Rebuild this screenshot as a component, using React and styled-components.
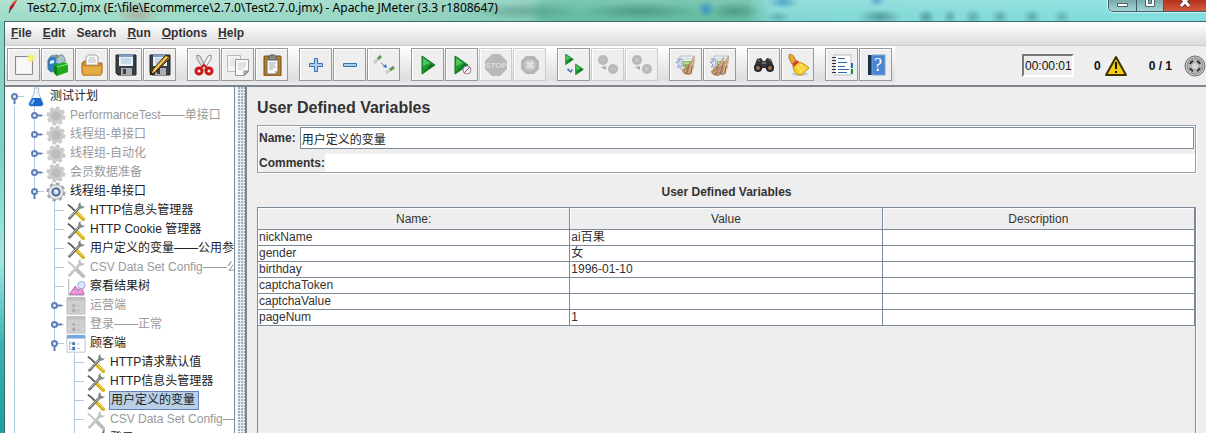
import React, { useState } from "react"
import styled, { createGlobalStyle } from "styled-components"

const GlobalStyle = createGlobalStyle`
* { box-sizing: border-box; }
body {
    margin: 0;
    font: 12px/16px "Liberation Sans", Arial, "Noto Sans CJK SC", sans-serif;
    color: #333;
    background: #eee;
}
button, input { font: inherit; color: inherit; }
`

const Window = styled.div`
display: flex;
flex-direction: column;
height: 100vh;
overflow: hidden;
padding-left: 4px;
background: linear-gradient(#8fd6c3, #7fd0c8 35%, #a4e6e2 60%, #35b3ae 80%, #1d9fa0);
`

const TitleBar = styled.header`
display: flex;
justify-content: space-between;
align-items: flex-start;
height: 21px;
flex: none;
margin-left: -4px;
padding-left: 6px;
background:
    radial-gradient(ellipse 22px 14px at 138px 14px, rgba(190,120,110,0.4), transparent),
    radial-gradient(ellipse 60px 9px at 525px 11px, rgba(40,100,90,0.3), transparent),
    radial-gradient(ellipse 60px 9px at 640px 11px, rgba(30,90,80,0.35), transparent),
    radial-gradient(ellipse 9px 9px at 706px 9px, rgba(30,120,210,0.6), transparent),
    radial-gradient(ellipse 26px 9px at 735px 11px, rgba(30,90,80,0.35), transparent),
    radial-gradient(ellipse 16px 7px at 783px 2px, rgba(40,130,190,0.6), transparent),
    radial-gradient(ellipse 13px 6px at 778px 17px, rgba(40,110,110,0.35), transparent),
    radial-gradient(ellipse 9px 7px at 877px 0, rgba(50,110,200,0.5), transparent),
    radial-gradient(ellipse 22px 8px at 880px 17px, rgba(30,80,90,0.45), transparent),
    radial-gradient(ellipse 9px 8px at 926px 17px, rgba(30,80,90,0.45), transparent),
    radial-gradient(ellipse 7px 8px at 950px 17px, rgba(30,80,90,0.35), transparent),
    radial-gradient(ellipse 9px 8px at 973px 17px, rgba(30,80,90,0.35), transparent),
    radial-gradient(ellipse 9px 8px at 1000px 17px, rgba(30,80,90,0.35), transparent),
    radial-gradient(ellipse 9px 8px at 1032px 17px, rgba(30,80,90,0.35), transparent),
    radial-gradient(ellipse 9px 8px at 1062px 17px, rgba(30,80,90,0.3), transparent),
    linear-gradient(rgba(255,255,255,0.15), rgba(255,255,255,0) 70%),
    linear-gradient(90deg, #a3ddca 0, #9ad8c6 30%, #85cbb7 44%, #66bda4 45%, #66bda4 62%, #83d8d4 64%, #84dfe0 100%);
`

const Title = styled.h1`
display: flex;
gap: 4px;
margin: 0;
font: 12px/16px "Noto Sans", "Open Sans", sans-serif;
color: #000;
white-space: nowrap;
`

const WindowControls = styled.div`
display: flex;
border: 1px solid #3d5f66;
border-top: none;
border-right: none;
border-radius: 0 0 0 5px;
overflow: hidden;
box-shadow: 0 0 1px 1px rgba(255,255,255,0.6);
`

const WindowButton = styled.button`
display: flex;
justify-content: center;
width: ${props => props.$close ? "43px" : "27px"};
height: 11px;
padding: 0;
border: none;
border-left: ${props => props.$first ? "none" : "1px solid #3d5f66"};
background: ${props => props.$close ? "linear-gradient(#b8301c, #cf5c43)" : "linear-gradient(#78aaae, #a5d5d6)"};
`

const Body = styled.div`
display: flex;
flex-direction: column;
flex: 1;
min-height: 0;
border-top: 1px solid #3c6a6a;
border-left: 1px solid #3c6a6a;
background: #eee;
`

const MenuBar = styled.nav`
display: flex;
height: 24px;
flex: none;
padding-left: 1px;
border-bottom: 1px solid #ccc;
background: linear-gradient(#fff, #dcdcdc);
`

const MenuItem = styled.button`
padding: 0 6px 2px 5px;
border: none;
background: none;
font-weight: bold;
&::first-letter {
    text-decoration: ${props => props.$plain ? "none" : "underline"};
}
`

const ToolBar = styled.div`
display: flex;
align-items: center;
justify-content: space-between;
height: 39px;
flex: none;
`

const Tools = styled.div`
display: flex;
gap: 11px;
height: 39px;
padding: 2px 3px 4px 2px;
background: linear-gradient(#fff, #dedede 85%, #eee);
`

const ToolGroup = styled.div`
display: flex;
gap: 1px;
`

const ToolButton = styled.button`
display: flex;
align-items: center;
justify-content: center;
width: 33px;
height: 33px;
padding: 0;
border: 1px solid #999;
background: #eee;
box-shadow: inset 1px 1px #fff;
&:disabled {
    border-color: #ccc;
}
`

const Status = styled.div`
display: flex;
align-items: center;
color: #111;
font-weight: bold;
`

const Clock = styled.output`
width: 52px;
height: 23px;
padding: 2px 1px;
margin-right: 20px;
border: 2px solid;
border-color: #777 #fff #fff #777;
font-weight: normal;
text-align: center;
`

const ErrorCount = styled.span`
display: flex;
align-items: center;
gap: 4px;
margin-right: 22px;
`

const Threads = styled.span`
margin-right: 12px;
`

const Split = styled.div`
display: flex;
flex: 1;
min-height: 0;
border-top: 2px solid #7f858c;
`

const TreePane = styled.ul`
width: 230px;
flex: none;
margin: 0;
padding: 0 0 0 1px;
list-style: none;
background: #fff;
border-right: 1px solid #7a8a99;
overflow: hidden;
`

const Divider = styled.div`
width: 10px;
flex: none;
border-left: 3px solid #f6f8fa;
background: #eee radial-gradient(circle at 1px 1px, #9fb0c0 1px, transparent 1px) 0 0 / 3px 3px;
`

const TreeRow = styled.li`
display: flex;
align-items: center;
height: 19px;
white-space: nowrap;
svg { flex: none; }
`

const TreeLabel = styled.span`
height: 19px;
margin-left: 3px;
padding: 0 3px 0 1px;
line-height: 17px;
border: 1px solid ${props => props.$selected ? "#6382bf" : "transparent"};
border-left-width: ${props => props.$selected ? "1px" : "0"};
background: ${props => props.$selected ? "#b8cfe5" : "none"};
color: ${props => props.$off ? "#999" : "#222"};
`

const Main = styled.main`
display: flex;
flex-direction: column;
flex: 1;
min-width: 0;
padding: 11px 10px 0;
border-left: 2px solid #7f858c;
`

const Heading = styled.h2`
margin: 0 0 7px;
font-size: 16px;
line-height: 20px;
`

const Fields = styled.form`
display: flex;
flex-direction: column;
gap: 5px;
flex: none;
padding: 1px 0 0 1px;
border: 1px solid #999fa8;
box-shadow: 1px 1px #fff, inset 1px 1px #fff;
`

const Field = styled.div`
display: flex;
align-items: center;
gap: ${props => props.$gap};
label {
    font-weight: bold;
}
input {
    flex: 1;
    min-width: 0;
    height: ${props => props.$framed ? "22px" : "18px"};
    margin-right: ${props => props.$framed ? "1px" : "0"};
    padding: 0 1px;
    border: ${props => props.$framed ? "1px solid #7a8a99" : "none"};
    background: #fff;
    color: #222;
    outline: none;
}
`

const Subtitle = styled.h3`
margin: 11px 0 7px;
font-size: 12px;
line-height: 16px;
text-align: center;
`

const TablePane = styled.div`
flex: 1;
min-height: 0;
border: 1px solid #7a8a99;
border-bottom: none;
box-shadow: 1px 0 #fff;
`

const Table = styled.table`
width: 100%;
table-layout: fixed;
border-spacing: 0;
th, td {
    padding: 0 1px;
    border-right: 1px solid #7a8a99;
    border-bottom: 1px solid #7a8a99;
}
th {
    height: 22px;
    font-weight: normal;
    box-shadow: inset 1px 1px #fff;
}
td {
    height: 16px;
    line-height: 15px;
    background: #fff;
}
`

const Pic = ({ size = 22, children }) => (
    <svg width={size} height={size} viewBox="0 0 22 22" fill="none" aria-hidden="true">{children}</svg>
)

const floppy = <>
    <path d="M1 1h20v20H3l-2-2z" fill="#3a3d42" stroke="#25272b" />
    <path d="M4 1h14v11H4z" fill="#e6f1fa" />
    <path d="M4 1h14v2H4z" fill="#7aa0c8" />
    <path d="M6 5h10M6 7h10M6 9h10" stroke="#aebfd0" />
    <path d="M6 14h11v7H6z" fill="#a9adb3" />
    <path d="M8 15h3v5H8z" fill="#3a3d42" />
</>

const Play = ({ x = 4, y = 2, s = 1 }) => (
    <g transform={`translate(${x} ${y}) scale(${s})`}>
        <path d="M1 0l13 9L1 18z" fill="#1e9a2e" stroke="#0c7420" />
        <path d="M2 2l7 5L2 10z" fill="#52c45c" />
        <path d="M2 16l11-7-3-1z" fill="#14661f" />
    </g>
)

const broom = <>
    <path d="M20 1l-5 8-8 7c0 3 3 5 8 5l4-9z" fill="#b98d67" />
    <path d="M19 4l-5 15M17 9l-7 9M19 9l-3 11" stroke="#e0c09c" />
    <path d="M14 11l-3 9M17 12l-1 8" stroke="#8c6546" />
</>

const notes = <>
    <path d="M5 2h13v13H5z" fill="#edf2f4" stroke="#b4bfc8" />
    <path d="M2 5l3 2-4 1 3 3-2 2h5v-8z" fill="#d3dcea" stroke="#93a5c2" />
    <path d="M8 7h8v6H8z" fill="#86b957" />
    <path d="M9 8h5v2H9z" fill="#b9dc8d" />
    <path d="M7 5h10" stroke="#c1c9ce" />
</>

const balls = (x) => <g>
    <circle cx="6" cy="6" r="5" fill="#b8b8b8" />
    <circle cx="16" cy="15" r="5" fill="#b8b8b8" />
    <path d="M4 13l5 3v-4z" fill="#aaa" />
    {x ? <path d="M4 4l4 4M8 4L4 8M14 13l4 4M18 13l-4 4" stroke="#d4d4d4" /> : <path d="M3 6h6M13 15h6" stroke="#ccc" />}
</g>

const art = {
    blank: <>
        <path d="M2.500 2.500h17v18h-17z" fill="#eee" stroke="#888" />
        <path d="M4 4h14v15H4z" fill="#f8f8f8" />
        <circle cx="18" cy="4" r="4" fill="#f4ee8a" opacity="0.7" />
        <circle cx="18" cy="4" r="2" fill="#fdf95c" />
    </>,
    templates: <>
        <path d="M1 6l3-4 6-1 1 3v13l-7 1-3-3z" fill="#2f7fc4" stroke="#4b7590" />
        <path d="M4 3c4-3 6 0 6 4M11 3c4-4 7 0 7 5" stroke="#8b999f" strokeWidth="2" />
        <path d="M11 3h6l1 6H9z" fill="#aac4cc" />
        <path d="M3 7l4-1v3l-4 1z" fill="#e9f6ff" />
        <path d="M7 11l10-3 4 2v8l-11 4-3-3z" fill="#20aa22" />
        <path d="M7 11l3 2v9l-3-3z" fill="#087d16" />
        <path d="M10 13l11-3" stroke="#88ee73" />
    </>,
    open: <>
        <path d="M1 9l2-2h6l1 2h11v10l-2 2H2l-1-2z" fill="#cf8b1e" stroke="#a66a12" />
        <path d="M5 11V3l3-2h7l2 2v8z" fill="#fafafa" stroke="#a5a5a5" />
        <path d="M8 4h6M7 6h8M7 8h8" stroke="#bbb" />
        <path d="M1 12h20l-1 9H2z" fill="#e5ab45" stroke="#c48221" />
    </>,
    save: floppy,
    saveAs: <>
        {floppy}
        <path d="M17 1l4 3L7 18l-6 3 3-6z" fill="#e5a62d" stroke="#322313" />
        <path d="M18 3L5 17" stroke="#fff0a0" />
        <path d="M19 4L7 17" stroke="#322313" />
        <path d="M1 21l1-3 2 2z" fill="#111" />
    </>,
    cut: <>
        <path d="M4 1l3 1 7 13-3 1L4 5z" fill="#d9dcdd" stroke="#8a8e90" />
        <path d="M18 1l-3 1-7 13 3 1 7-11z" fill="#f2f2f2" stroke="#8a8e90" />
        <ellipse cx="6" cy="17" rx="3" ry="3" stroke="#d01818" strokeWidth="3" />
        <ellipse cx="16" cy="17" rx="3" ry="3" stroke="#d01818" strokeWidth="3" />
        <path d="M8 14l3-3 3 3" stroke="#d01818" strokeWidth="2" />
    </>,
    copy: <>
        <path d="M0.500 1.500h13v16h-13z" fill="#f4f4f4" stroke="#bbb" />
        <path d="M3 5h8M3 7h8M3 9h5M3 11h5" stroke="#ddd" />
        <path d="M8.500 5.500h13v12l-4 4h-9z" fill="#fafafa" stroke="#999" />
        <path d="M21 17h-4v4z" fill="#ccc" stroke="#888" />
        <path d="M11 9h8M11 11h8M11 13h7M11 15h5" stroke="#ccc" />
    </>,
    paste: <>
        <rect x="3" y="2" width="17" height="20" rx="1" fill="#b77b25" stroke="#754a16" />
        <path d="M6 5h11v12l-3 3H6z" fill="#f9fafb" stroke="#6d6d62" />
        <path d="M8 3c0-3 7-3 7 0l1 3H7z" fill="#858a80" stroke="#5c6159" />
        <path d="M8 9h7M8 11h6M8 13h7M8 15h4" stroke="#a4acb3" />
        <path d="M14 20v-3h3z" fill="#bbb" />
    </>,
    add: <path d="M9.500 4.500h3v5h5v3h-5v5h-3v-5h-5v-3h5z" fill="#a9cdef" stroke="#3d70b2" />,
    remove: <path d="M4.500 9.500h13v3h-13z" fill="#a9cdef" stroke="#3d70b2" />,
    toggle: <>
        <path d="M1 9l5-5M13 19l5-4" stroke="#c4d3c1" strokeWidth="3" />
        <path d="M5 5l3-3M17 16l4-3" stroke="#5f9a5a" strokeWidth="3" />
        <path d="M8 9l5 4" stroke="#3b79d0" />
        <path d="M14 14l-4-1 3-3z" fill="#3b79d0" />
    </>,
    start: <Play />,
    startNoPause: <>
        <Play x={3} />
        <circle cx="16" cy="16" r="4" fill="#eef" stroke="#8b8ba8" />
        <path d="M13 19l6-6" stroke="#d43b48" />
    </>,
    stop: <>
        <path d="M7 0h8l7 7v8l-7 7H7l-7-7V7z" fill="#b9b9b9" />
        <text x="11" y="14" fontSize="8" fontWeight="bold" textAnchor="middle" fill="#ddd">STOP</text>
    </>,
    shutdown: <>
        <path d="M7 2h8l5 5v8l-5 5H7l-5-5V7z" fill="#b5b5b5" />
        <circle cx="11" cy="11" r="6" fill="#c6c6c6" />
        <path d="M8 8l6 6M14 8l-6 6" stroke="#e2e2e2" strokeWidth="3" />
    </>,
    remoteStart: <>
        <Play x={2} y={0} s={0.6} />
        <Play x={12} y={10} s={0.6} />
        <path d="M5 14l3 3v-2l2 1-2 3-4-3z" fill="#4c73bc" />
    </>,
    remoteStop: balls(false),
    remoteShutdown: balls(true),
    clear: <>{notes}{broom}</>,
    clearAll: <>{notes}<g transform="translate(-5 1)">{broom}</g>{broom}</>,
    search: <>
        <path d="M4 5l4-1 2 3h2l2-3 4 1 3 8-5 4-4-3h-2l-4 3-5-4z" fill="#333338" />
        <path d="M5 6l2 1M16 5l2 2M9 9h4" stroke="#9d9da2" />
        <circle cx="5" cy="14" r="4" fill="#25262b" />
        <circle cx="17" cy="14" r="4" fill="#25262b" />
        <circle cx="5" cy="14" r="2" fill="#9c6d4a" />
        <circle cx="17" cy="14" r="2" fill="#9c6d4a" />
    </>,
    clearSearch: <>
        <ellipse cx="13" cy="20" rx="8" ry="2" fill="#c9c9c9" />
        <path d="M2 1c2-2 4 0 5 2l2 4-4 3-3-6z" fill="#e6a735" stroke="#b97516" />
        <path d="M9 8c6 0 10 3 13 6l-8 7c-5 0-8-4-8-10z" fill="#f8d12d" stroke="#be8d0e" />
        <path d="M5 10l5-4 2 2-5 5z" fill="#d5422c" />
        <path d="M10 11l5 8M13 10l5 7" stroke="#fff28b" />
    </>,
    functions: <>
        <path d="M3 1h17v20H3z" fill="#fff" stroke="#b5bcc6" />
        <path d="M20 9h2v5h-2z" fill="#286acb" />
        <path d="M20 15h2v5h-2z" fill="#189532" />
        <path d="M7 4.500h7M7 8.500h9M7 12.500h7M7 15.500h11M7 18.500h9" stroke="#2868b0" />
        <path d="M1 3.500h4M1 6.500h4M1 9.500h4M1 12.500h4M1 15.500h4M1 18.500h4" stroke="#333" />
    </>,
    help: <>
        <path d="M3 1h17v20H3z" fill="#4a86d0" />
        <path d="M3 1h4v20H3z" fill="#1e3048" />
        <path d="M7 1h13v20H7z" stroke="#74a5df" />
        <text x="13" y="17" fontSize="18" textAnchor="middle" fill="#fff" fontFamily="Liberation Serif">?</text>
    </>,
    warning: <>
        <path d="M11 2L1 20h20z" fill="#f4cc12" stroke="#3b3200" strokeWidth="2" strokeLinejoin="round" />
        <path d="M11 7v7M11 16v2" stroke="#1b1700" strokeWidth="2" />
    </>,
    idle: <>
        <circle cx="11" cy="11" r="10" fill="#c9c9c9" stroke="#6d6d6d" />
        <circle cx="11" cy="11" r="8" fill="#b4b4b4" stroke="#8d8d8d" />
        <path d="M6 9a5 5 0 013-3M13 6a5 5 0 013 3M16 13a5 5 0 01-3 3M9 16a5 5 0 01-3-3" stroke="#333" strokeWidth="2" />
        <circle cx="11" cy="11" r="3" fill="#d5d5d5" />
    </>,
}

const Gear = ({ off }) => {
    const c = off ? "#cacaca" : "#a3a8ad"
    return <>
        <circle cx="11" cy="11" r="9" stroke={c} strokeWidth="3" strokeDasharray="4 3" />
        <circle cx="11" cy="11" r="8" fill={off ? "#cdcdcd" : "#e8eaeb"} stroke={c} />
        <circle cx="11" cy="11" r="4" fill={off ? "#bdbdbd" : "#b9cdf1"} stroke={off ? "#bbb" : "#475f8e"} strokeWidth="2" />
        {!off && <path d="M9 8l4 2-2 3z" fill="#fff" />}
    </>
}

const Wrench = ({ off }) => <>
    <path d="M2 4l4 3 6 6" stroke={off ? "#c2c2c2" : "#555"} strokeWidth="2" />
    <path d="M11 12l8 8" stroke={off ? "#bcbcbc" : "#d7b321"} strokeWidth="4" strokeLinecap="round" />
    {!off && <path d="M12 12l7 7" stroke="#fae459" />}
    <path d="M3 20L15 7" stroke={off ? "#c0c0c0" : "#6c7671"} strokeWidth="3" />
    <path d="M4 18L15 7" stroke={off ? "#d5d5d5" : "#c8cdc9"} />
    <path d="M16 1c-3 2-3 4-2 6s4 2 7-1l-3 0-2-2z" fill={off ? "#c0c0c0" : "#7f8a86"} />
</>

const Controller = ({ off }) => <>
    <path d="M1 2h20v18H1z" fill={off ? "#cfcfcf" : "#fff"} stroke={off ? "#c5c5c5" : "#b8c2cc"} />
    <path d="M1 1h20v4H1z" fill={off ? "#c1c1c1" : "#75a8df"} />
    {!off && <path d="M4 8v9h4M4 10h4" stroke="#9aabc4" />}
    <path d="M7 9h3v3H7zM7 14h3v4H7z" fill={off ? "#adadad" : "#3571bd"} />
    <path d="M12 11h3M12 16h3" stroke={off ? "#b8b8b8" : "#bbc"} />
</>

const nodeArt = {
    plan: () => <>
        <path d="M9 1h5v6l5 11c0 2-1 3-3 3H6c-2 0-3-1-3-3L9 7z" fill="#edf6ff" stroke="#aab9c9" />
        <path d="M7 12h9l3 7-2 2H5l-2-2z" fill="#1767ce" />
        <path d="M9 14l-3 5" stroke="#8cc4ff" strokeWidth="2" />
    </>,
    gear: Gear,
    wrench: Wrench,
    controller: Controller,
    results: () => <>
        <path d="M3 2v18h17" stroke="#aab" />
        <path d="M4 19l6-9 4 4 3-3 3 8z" fill="#f29ad8" stroke="#c057a5" />
        <path d="M8 13c2 0 4 4 6 2s2-8 6-9" stroke="#8295d0" />
        <circle cx="17" cy="9" r="4" fill="#dbe5ff" stroke="#95a3cf" />
    </>,
    sampler: () => <path d="M4 18L18 4l2-3-1 9-7 8z" fill="#5daa4b" stroke="#3e8632" />,
}

// guide column: "|" line through, "-" line with branch, "+" closed, "v" open, "." last open child
const Guide = ({ kind }) => (
    <svg width="20" height="19" viewBox="0 0 20 19" fill="none" aria-hidden="true">
        {"|-+".includes(kind) && <path d="M8.500 0v19" stroke="#b3c8e0" />}
        {kind === "." && <path d="M8.500 0v9" stroke="#b3c8e0" />}
        {kind === "-" && <path d="M9 9.500h9" stroke="#b3c8e0" />}
        {"+v.".includes(kind) && <>
            <path d="M11 9.500h7" stroke="#b3c8e0" />
            {kind === "+" ? <path d="M10 9.500h6" stroke="#5f80b6" strokeWidth="2" /> : <path d="M8.500 10v7" stroke="#5f80b6" strokeWidth="2" />}
            <circle cx="8.500" cy="9.500" r="2.500" fill="#e9f0fa" stroke="#5f80b6" strokeWidth="2" />
        </>}
    </svg>
)

const nodes = [
    ["v", "plan", "测试计划"],
    ["|+", "gear", "PerformanceTest——单接口", true],
    ["|+", "gear", "线程组-单接口", true],
    ["|+", "gear", "线程组-自动化", true],
    ["|+", "gear", "会员数据准备", true],
    ["|.", "gear", "线程组-单接口"],
    ["| -", "wrench", "HTTP信息头管理器"],
    ["| -", "wrench", "HTTP Cookie 管理器"],
    ["| -", "wrench", "用户定义的变量——公用参"],
    ["| -", "wrench", "CSV Data Set Config——公", true],
    ["| -", "results", "察看结果树"],
    ["| +", "controller", "运营端", true],
    ["| +", "controller", "登录——正常", true],
    ["| .", "controller", "顾客端"],
    ["|  -", "wrench", "HTTP请求默认值"],
    ["|  -", "wrench", "HTTP信息头管理器"],
    ["|  -", "wrench", "用户定义的变量"],
    ["|  -", "wrench", "CSV Data Set Config—", true],
    ["|  -", "sampler", "登录"],
]

const tools = [
    [["blank", "New"], ["templates", "Templates"], ["open", "Open"], ["save", "Save"], ["saveAs", "Save as"]],
    [["cut", "Cut"], ["copy", "Copy"], ["paste", "Paste"]],
    [["add", "Expand all"], ["remove", "Collapse all"], ["toggle", "Toggle"]],
    [["start", "Start"], ["startNoPause", "Start no pauses"], ["stop", "Stop", true], ["shutdown", "Shutdown", true]],
    [["remoteStart", "Remote start all"], ["remoteStop", "Remote stop all", true], ["remoteShutdown", "Remote shutdown all", true]],
    [["clear", "Clear"], ["clearAll", "Clear all"]],
    [["search", "Search"], ["clearSearch", "Reset search"]],
    [["functions", "Function helper"], ["help", "Help"]],
]

const variables = [
    ["nickName", "ai百果"],
    ["gender", "女"],
    ["birthday", "1996-01-10"],
    ["captchaToken", ""],
    ["captchaValue", ""],
    ["pageNum", "1"],
]

function App() {
    const [selected, setSelected] = useState(16)
    const [name, setName] = useState("用户定义的变量")
    const [comments, setComments] = useState("")

    return (
        <Window>
            <GlobalStyle />
            <TitleBar>
                <Title>
                    <svg width="17" height="14" viewBox="0 0 17 14" fill="none" aria-hidden="true">
                        <path d="M10 0L4 6l-1 5 4-3 4-8z" fill="#c92a35" />
                        <path d="M8 0L5 6" stroke="#e9a23b" />
                        <path d="M7 4l-4 9" stroke="#4c1f35" />
                    </svg>
                    Test2.7.0.jmx (E:\file\Ecommerce\2.7.0\Test2.7.0.jmx) - Apache JMeter (3.3 r1808647)
                </Title>
                <WindowControls>
                    <WindowButton $first aria-label="Minimize">
                        <svg width="13" height="8"><path d="M1.500 3.500h10v3h-10z" fill="#fff" stroke="#4d646b" /></svg>
                    </WindowButton>
                    <WindowButton aria-label="Maximize">
                        <svg width="12" height="8"><path d="M1.500-3v9.500h9V-3" fill="#fff" stroke="#4d646b" /><path d="M4.500 0v3.500h3V0z" fill="#88aeb2" stroke="#4d646b" /></svg>
                    </WindowButton>
                    <WindowButton $close aria-label="Close">
                        <svg width="14" height="8" fill="none"><path d="M3-3l8 9M11-3L3 6" stroke="#5d3b3b" strokeWidth="5" /><path d="M3-3l8 9M11-3L3 6" stroke="#fff" strokeWidth="3" /></svg>
                    </WindowButton>
                </WindowControls>
            </TitleBar>
            <Body>
                <MenuBar>
                    {["File", "Edit", "Search", "Run", "Options", "Help"].map(item => (
                        <MenuItem key={item} $plain={item === "Search"}>{item}</MenuItem>
                    ))}
                </MenuBar>
                <ToolBar>
                    <Tools>
                        {tools.map((group, i) => (
                            <ToolGroup key={i}>
                                {group.map(([icon, label, off]) => (
                                    <ToolButton key={icon} aria-label={label} disabled={off}><Pic>{art[icon]}</Pic></ToolButton>
                                ))}
                            </ToolGroup>
                        ))}
                    </Tools>
                    <Status>
                        <Clock>00:00:01</Clock>
                        <ErrorCount>0 <Pic>{art.warning}</Pic></ErrorCount>
                        <Threads>0 / 1</Threads>
                        <Pic>{art.idle}</Pic>
                    </Status>
                </ToolBar>
                <Split>
                    <TreePane>
                        {nodes.map(([guides, icon, label, off], i) => {
                            const Art = nodeArt[icon]
                            return (
                                <TreeRow key={i} onClick={() => setSelected(i)}>
                                    {guides.split("").map((kind, j) => <Guide key={j} kind={kind} />)}
                                    <Pic size={20}><Art off={off} /></Pic>
                                    <TreeLabel $off={off} $selected={i === selected}>{label}</TreeLabel>
                                </TreeRow>
                            )
                        })}
                    </TreePane>
                    <Divider />
                    <Main>
                        <Heading>User Defined Variables</Heading>
                        <Fields>
                            <Field $framed $gap="4px">
                                <label htmlFor="name">Name:</label>
                                <input id="name" value={name} onChange={(e) => setName(e.target.value)} />
                            </Field>
                            <Field $gap="0">
                                <label htmlFor="comments">Comments:</label>
                                <input id="comments" value={comments} onChange={(e) => setComments(e.target.value)} />
                            </Field>
                        </Fields>
                        <Subtitle>User Defined Variables</Subtitle>
                        <TablePane>
                            <Table>
                                <thead>
                                    <tr><th>Name:</th><th>Value</th><th>Description</th></tr>
                                </thead>
                                <tbody>
                                    {variables.map(([key, value]) => (
                                        <tr key={key}><td>{key}</td><td>{value}</td><td></td></tr>
                                    ))}
                                </tbody>
                            </Table>
                        </TablePane>
                    </Main>
                </Split>
            </Body>
        </Window>
    )
}

export default App
